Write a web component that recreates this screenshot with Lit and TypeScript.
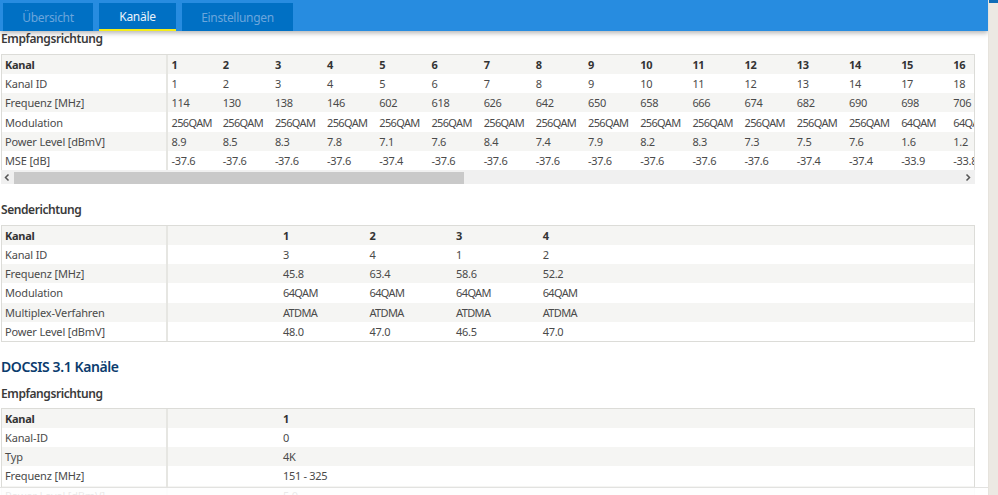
import { LitElement, html, css } from "lit";
import { customElement } from "lit/decorators.js";

type Row = [string, ...string[]];

const down: Row[] = [
  ["Kanal", "1","2","3","4","5","6","7","8","9","10","11","12","13","14","15","16"],
  ["Kanal ID", "1","2","3","4","5","6","7","8","9","10","11","12","13","14","17","18"],
  ["Frequenz [MHz]", "114","130","138","146","602","618","626","642","650","658","666","674","682","690","698","706"],
  ["Modulation", ...Array(14).fill("256QAM"), "64QAM", "64QAM"],
  ["Power Level [dBmV]", "8.9","8.5","8.3","7.8","7.1","7.6","8.4","7.4","7.9","8.2","8.3","7.3","7.5","7.6","1.6","1.2"],
  ["MSE [dB]", "-37.6","-37.6","-37.6","-37.6","-37.4","-37.6","-37.6","-37.6","-37.6","-37.6","-37.6","-37.6","-37.4","-37.4","-33.9","-33.8"],
];
const up: Row[] = [
  ["Kanal", "1","2","3","4",""],
  ["Kanal ID", "3","4","1","2",""],
  ["Frequenz [MHz]", "45.8","63.4","58.6","52.2",""],
  ["Modulation", "64QAM","64QAM","64QAM","64QAM",""],
  ["Multiplex-Verfahren", "ATDMA","ATDMA","ATDMA","ATDMA",""],
  ["Power Level [dBmV]", "48.0","47.0","46.5","47.0",""],
];
const ofdm: Row[] = [
  ["Kanal", "1"],
  ["Kanal-ID", "0"],
  ["Typ", "4K"],
  ["Frequenz [MHz]", "151 - 325"],
  ["Power Level [dBmV]", "5.0"],
];

@customElement("app-root")
export class AppRoot extends LitElement {
  static styles = css`
    :host { display: block; height: 495px; overflow: hidden; position: relative; background: #fff;
      font-family: "Noto Sans", sans-serif; font-size: 11px; letter-spacing: -0.3px; color: #4a4a4a; }
    .page { display: grid; grid-template-columns: 988px 10px; height: 495px; }
    .gutter { background: linear-gradient(#0f6db8 0 3px, #ece9e3 3px); border-left: 1px solid #e6e3dd; }
    .main { min-width: 0; overflow: hidden; }
    .bar { height: 31px; background: #278ce0; display: flex; gap: 6px; padding: 3px 0 0 3px; box-sizing: border-box;
      box-shadow: 0 2px 5px rgba(0,0,0,.3); position: relative; }
    .tab { background: #0070c4; color: #6ba6dc; font-size: 12px; letter-spacing: -0.3px; display: flex; align-items: center; justify-content: center; height: 28px; box-sizing: border-box; }
    .t1 { width: 90px; }
    .t2 { width: 77px; color: #e8f2fb; border-bottom: 2px solid #f4ec1a; padding-top: 1px; }
    .t3 { width: 111px; }
    .content { padding: 0 13px 0 1px; }
    h3 { margin: 0; font-size: 12px; letter-spacing: -0.42px; font-weight: 600; color: #3a3a3a; height: 16px; line-height: 16px; }
    h2 { margin: 0; font-size: 14px; letter-spacing: -0.4px; font-weight: 600; color: #0b3c6e; height: 20px; line-height: 20px; }
    .wrap { border: 1px solid #dcdcd8; overflow: hidden; }
    table { border-collapse: collapse; table-layout: fixed; }
    td { height: 19.17px; padding: 0 0 0 3.5px; white-space: nowrap; overflow: hidden; box-sizing: border-box; }
    td:first-child { border-right: 2px solid #e6e6e2; padding-left: 3px; letter-spacing: -0.15px; }
    tr:nth-child(odd) td { background: #f5f5f3; }
    tr:first-child td { font-weight: 700; color: #333; letter-spacing: -0.3px; }
    td.q { letter-spacing: -0.65px; }
    .wide { width: 1000px; }
    .mid, .full { width: 974px; }
    td.lead { padding-left: 115px; }
    .hbar { height: 14px; background: #f0f0f0; position: relative; }
    .thumb { position: absolute; left: 13px; width: 450px; height: 12px; bottom: 0; background: #c9c9c9; }
    .arrow { position: absolute; top: 3px; width: 8px; height: 9px; }
    .al { left: 2px; } .ar { right: 3px; }
    .s0 { margin-bottom: 7px; }
    .s2 { margin-top: 18px; margin-bottom: 7px; }
    .d { margin-top: 15px; }
    .s3 { margin-top: 9px; margin-bottom: 6px; }
    .fade { position: absolute; left: 0; top: 487px; width: 988px; height: 8px; background: rgba(255,255,255,.88); border-top: 1px solid #e2e2e0; box-sizing: border-box; }
    .no-bottom { border-bottom: 0; }
  `;

  private rows(rows: Row[], lead = false) {
    return html`<tbody>${rows.map(
      (r) => html`<tr>${r.map((c, i) => {
        const cls = [i > 0 && /QAM|ATDMA/.test(c) ? "q" : "", lead && i === 1 ? "lead" : ""].join(" ");
        return html`<td class=${cls}>${c}</td>`;
      })}</tr>`
    )}</tbody>`;
  }

  private cols(widths: string[]) {
    return html`<colgroup>${widths.map((w) => html`<col style="width:${w}" />`)}</colgroup>`;
  }

  render() {
    return html`
      <div class="page">
        <div class="main">
          <div class="bar">
            <div class="tab t1">Übersicht</div>
            <div class="tab t2">Kanäle</div>
            <div class="tab t3">Einstellungen</div>
          </div>
          <div class="content">
            <h3 class="s0">Empfangsrichtung</h3>
            <div class="wrap no-bottom"><table class="wide">${this.cols(["165px", ...Array(16).fill("52.19px")])}${this.rows(down)}</table></div>
            <div class="hbar">
              <svg class="arrow al" viewBox="0 0 8 9"><path d="M5.5 1.5 2.5 4.5l3 3" fill="none" stroke="#555" stroke-width="1.5"/></svg>
              <div class="thumb"></div>
              <svg class="arrow ar" viewBox="0 0 8 9"><path d="M2.5 1.5l3 3-3 3" fill="none" stroke="#555" stroke-width="1.5"/></svg>
            </div>
            <h3 class="s2">Senderichtung</h3>
            <div class="wrap"><table class="mid">${this.cols(["165px", "199px", "86.6px", "86.6px", "86.6px", "auto"])}${this.rows(up, true)}</table></div>
            <h2 class="d">DOCSIS 3.1 Kanäle</h2>
            <h3 class="s3">Empfangsrichtung</h3>
            <div class="wrap"><table class="full">${this.cols(["165px", "auto"])}${this.rows(ofdm, true)}</table></div>
          </div>
        </div>
        <div class="gutter"></div>
      </div>
      <div class="fade"></div>
    `;
  }
}
